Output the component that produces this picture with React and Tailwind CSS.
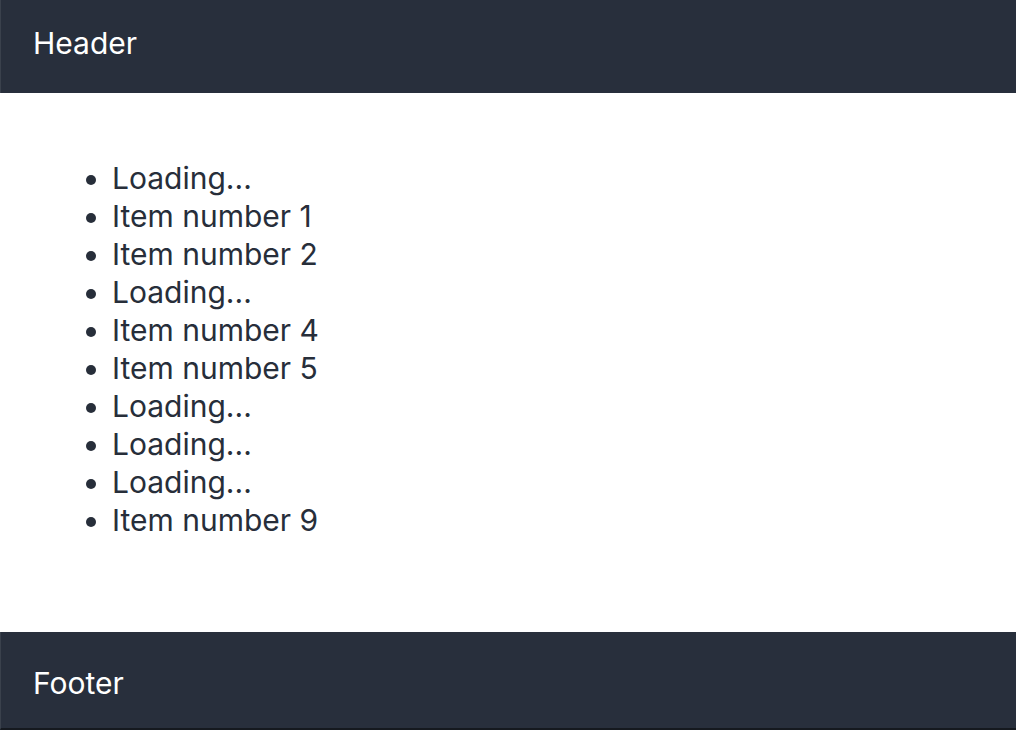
import React from "react";

const items = [
  "Loading...",
  "Item number 1",
  "Item number 2",
  "Loading...",
  "Item number 4",
  "Item number 5",
  "Loading...",
  "Loading...",
  "Loading...",
  "Item number 9",
];

export default function App() {
  return (
    <div
      className="flex h-[730px] w-full flex-col bg-white"
      style={{ fontFamily: "Inter, 'Noto Sans', sans-serif" }}
    >
      <header className="flex h-[93px] shrink-0 items-center border-l border-[#3a414c] bg-[#282f3c] pb-[6px] pl-[32px] text-[30px] text-white">
        Header
      </header>
      <main className="flex-1 pt-[66px]">
        <ul className="list-disc pl-[112px] text-[30px] leading-[38px] text-[#272e3a] marker:text-[#272e3a]">
          {items.map((t, i) => (
            <li key={i}>{t}</li>
          ))}
        </ul>
      </main>
      <footer className="flex h-[98px] shrink-0 items-center border-b-2 border-l border-b-[#15191f] border-l-[#3a414c] bg-[#282f3c] pt-[6px] pl-[32px] text-[30px] text-white">
        Footer
      </footer>
    </div>
  );
}
